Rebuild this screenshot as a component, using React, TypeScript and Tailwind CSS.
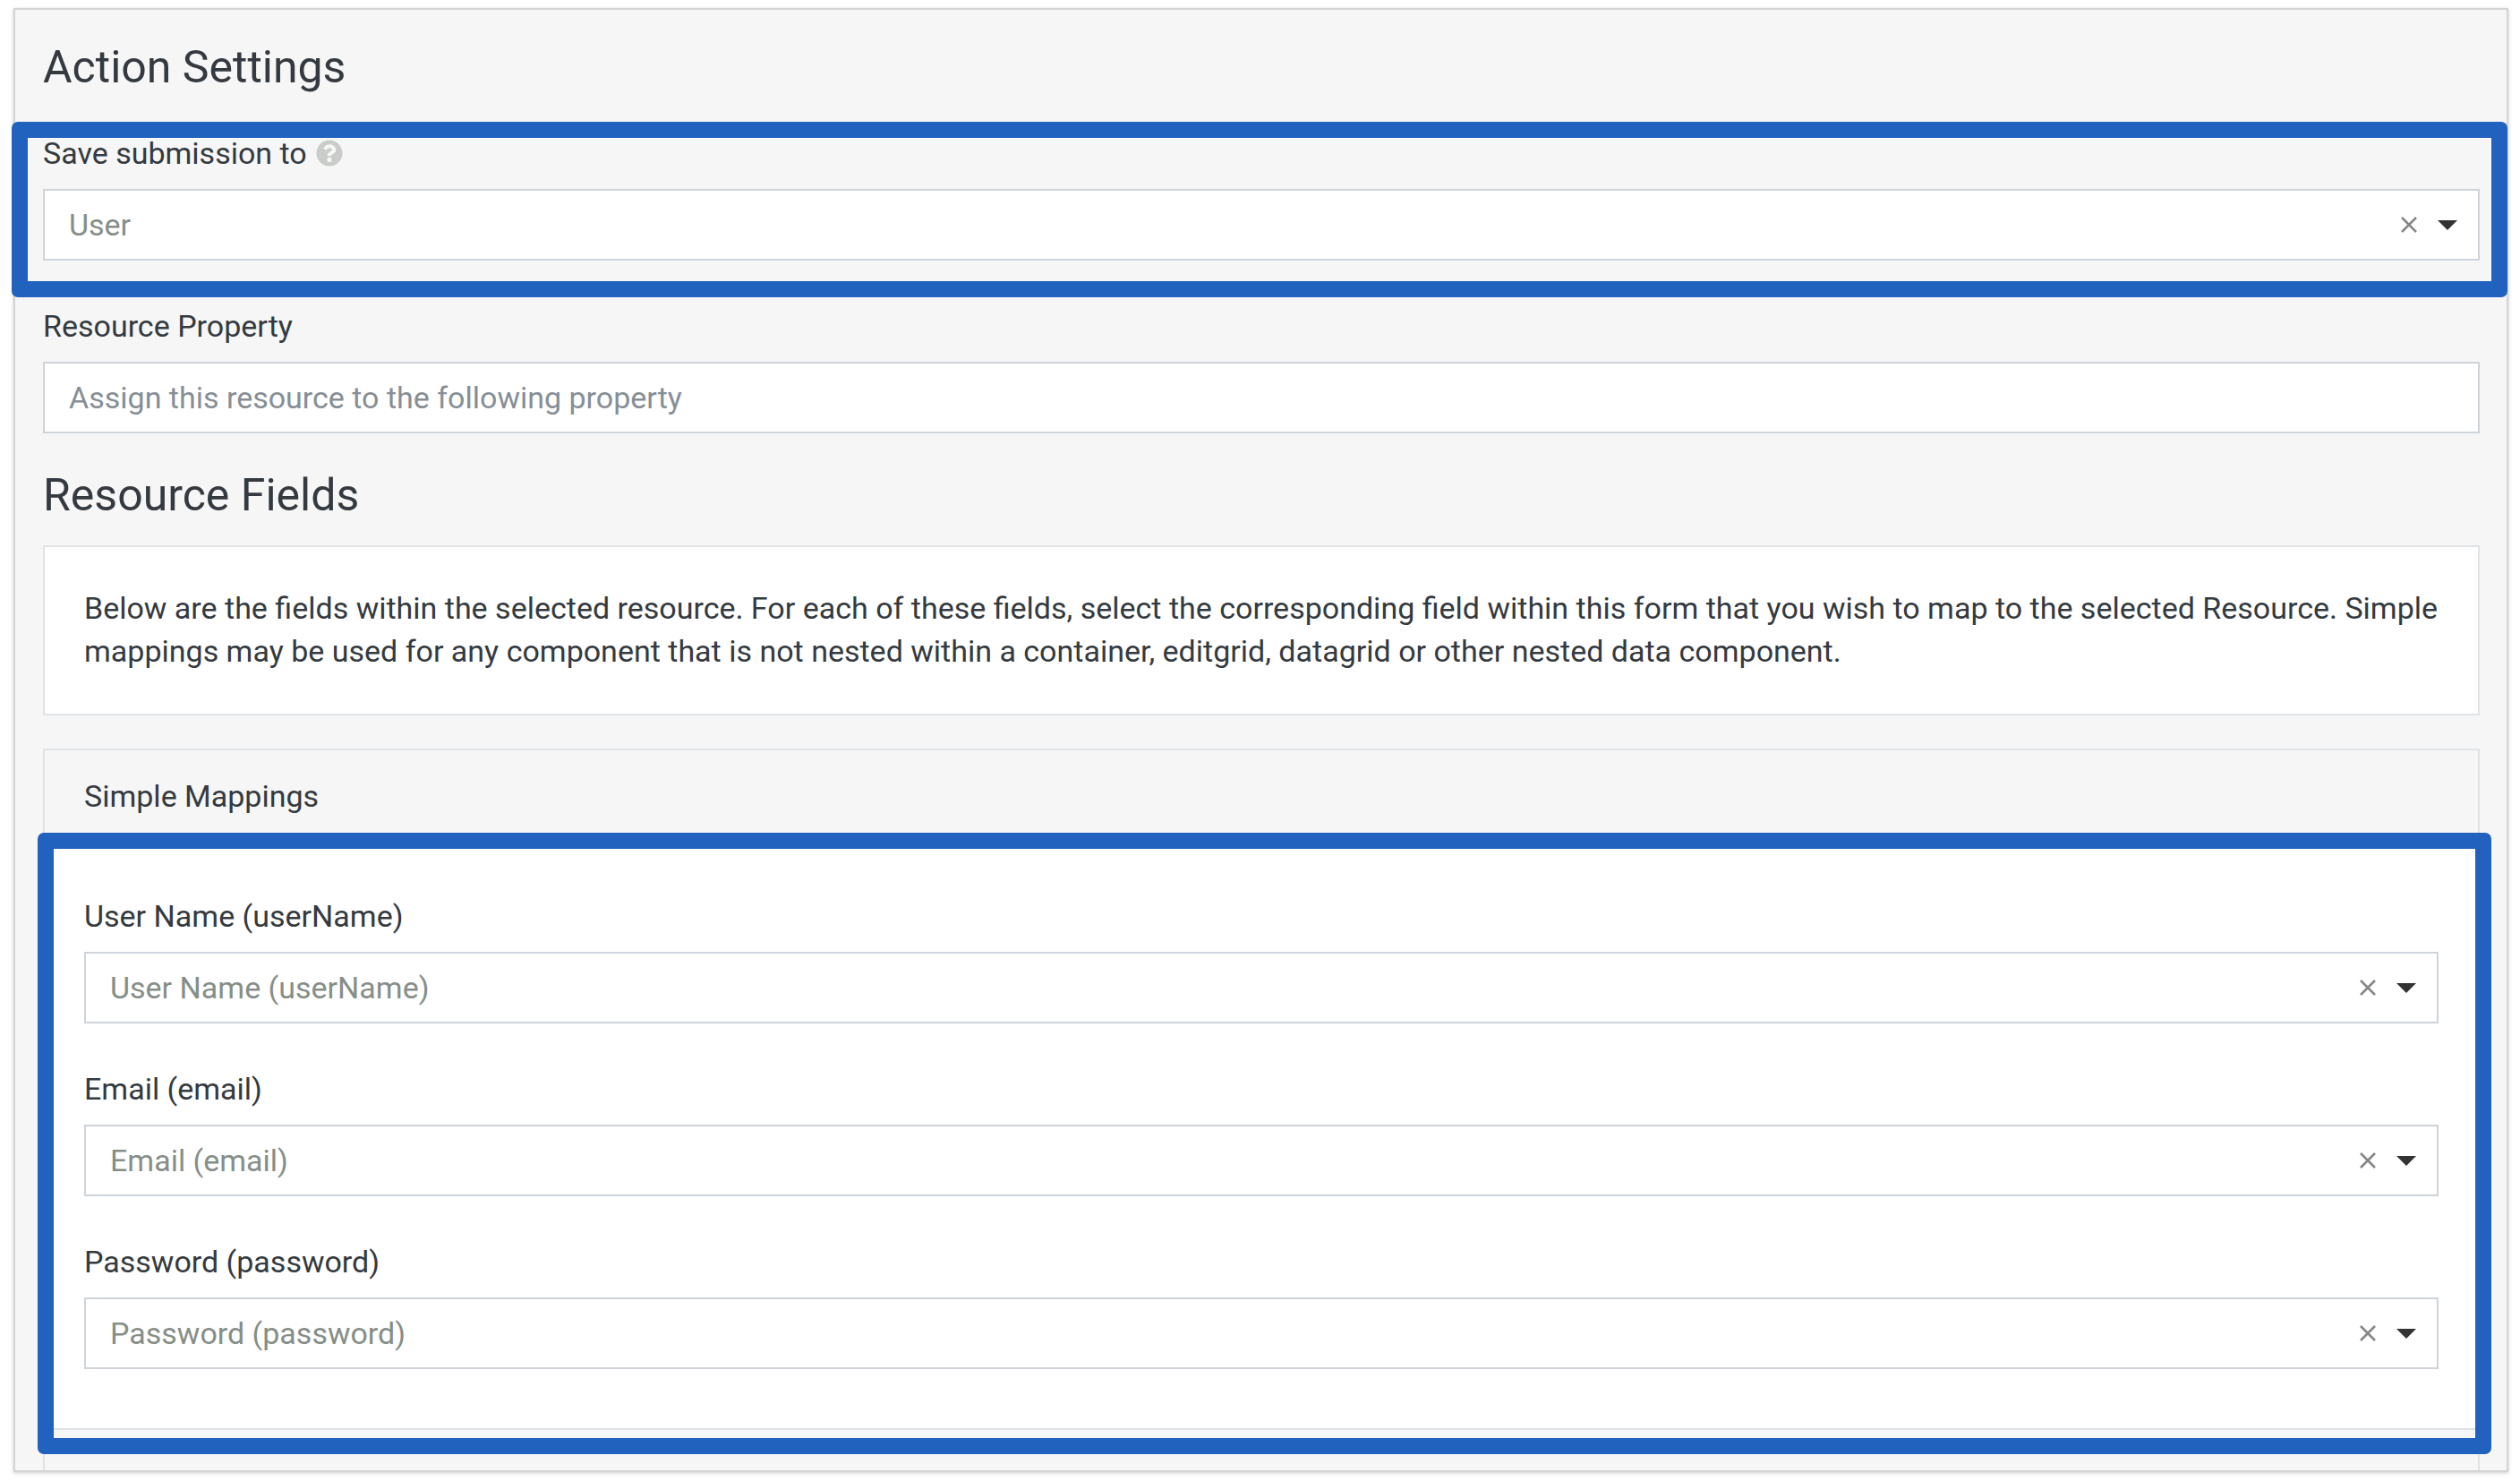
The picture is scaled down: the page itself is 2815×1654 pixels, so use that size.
import React from 'react'
import { FaQuestionCircle } from 'react-icons/fa'

const Clear = () => (
  <svg width="18" height="18" viewBox="0 0 18 18" className="shrink-0">
    <path d="M1 1 L17 17 M17 1 L1 17" stroke="#868686" strokeWidth="2.6" fill="none" />
  </svg>
)

const Caret = () => (
  <svg width="22" height="11" viewBox="0 0 22 11" className="shrink-0">
    <path d="M0 0 H22 L11 11 Z" fill="#333333" />
  </svg>
)

const SelectBox = ({ value }: { value: string }) => (
  <div className="flex h-[80px] items-center gap-[23px] border-2 border-[#ced4da] bg-white pl-[27px] pr-[23px]">
    <span className="flex-1 text-[#868e88]">{value}</span>
    <Clear />
    <Caret />
  </div>
)

const Field = ({ label, children }: { label: React.ReactNode; children: React.ReactNode }) => (
  <div className="flex flex-col gap-[16px]">
    <div className="flex h-[48px] items-center gap-[10px] leading-[48px]">{label}</div>
    {children}
  </div>
)

const mappings = ['User Name (userName)', 'Email (email)', 'Password (password)']

export default function App() {
  return (
    <div className="relative h-[1654px] w-full overflow-hidden bg-white font-['Roboto',sans-serif] text-[34px] text-[#343a40]">
      <div className="ml-[15px] mt-[9px] h-[1635px] w-[2787px] overflow-hidden border-2 border-[#d4d4d4] bg-[#f6f6f6] pl-[31px] pr-[30px] pt-[34px] shadow-[0_1px_4px_rgba(0,0,0,0.2)]">
        <h3 className="h-[60px] text-[50px] leading-[60px]">Action Settings</h3>

        <div className="mt-[42px]">
          <Field
            label={
              <>
                <span>Save submission to</span>
                <FaQuestionCircle className="text-[30px] text-[#c9ccc8]" />
              </>
            }
          >
            <SelectBox value="User" />
          </Field>
        </div>

        <div className="mt-[49px]">
          <Field label="Resource Property">
            <input
              placeholder="Assign this resource to the following property"
              className="h-[80px] w-full border-2 border-[#ced4da] bg-white pl-[27px] outline-none placeholder:text-[#868e96]"
            />
          </Field>
        </div>

        <h3 className="mt-[39px] h-[60px] text-[50px] leading-[60px]">Resource Fields</h3>

        <div className="mt-[26px] h-[190px] border-2 border-[#e0e3e6] bg-white px-[44px] pt-[44px] leading-[48px]">
          Below are the fields within the selected resource. For each of these fields, select the corresponding field within this form that you wish to map to the selected Resource. Simple mappings may be used for any component that is not nested within a container, editgrid, datagrid or other nested data component.
        </div>

        <div className="mt-[37px] border-2 border-[#e0e3e6] bg-white">
          <div className="h-[110px] bg-[#f6f6f6] pl-[44px] pt-[27px] leading-[48px]">Simple Mappings</div>
          <div className="flex flex-col gap-[49px] px-[44px] pb-[66px] pt-[51px]">
            {mappings.map((m) => (
              <Field key={m} label={m}>
                <SelectBox value={m} />
              </Field>
            ))}
          </div>
        </div>

        <div className="mt-[16px] h-[40px] border-2 border-[#e0e3e6] bg-[#f6f6f6]" />
      </div>

      {/* blue annotation frames drawn over the form */}
      <div className="absolute left-[13px] top-[136px] h-[196px] w-[2788px] rounded-[7px] border-[18px] border-[#2062bd]" />
      <div className="absolute left-[42px] top-[930px] h-[694px] w-[2741px] rounded-[7px] border-[18px] border-[#2062bd]" />
    </div>
  )
}
